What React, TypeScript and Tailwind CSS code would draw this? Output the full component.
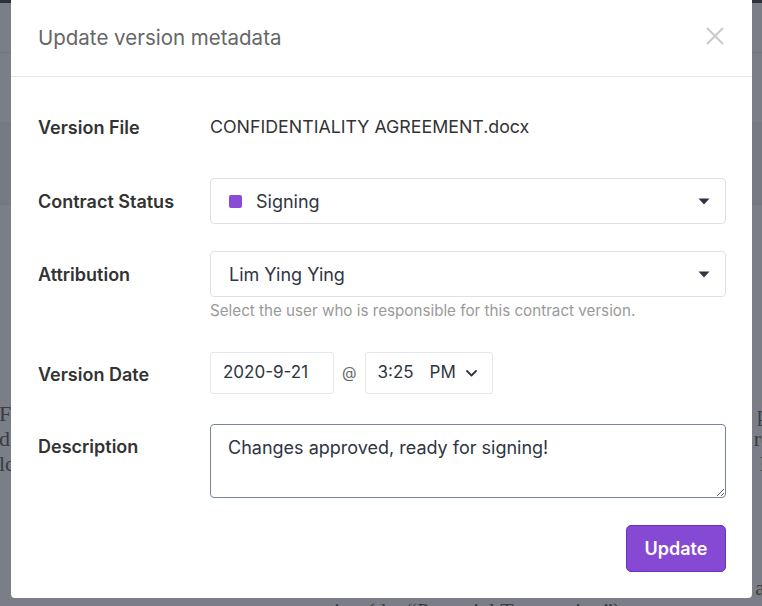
import { X } from "lucide-react";

const font = { fontFamily: "Inter, 'Noto Sans', sans-serif" };

function Caret() {
  return (
    <svg width="12" height="7" viewBox="0 0 12 7" className="shrink-0">
      <path d="M0.5 0.5 L11.5 0.5 L6 6.5 Z" fill="#2f3542" />
    </svg>
  );
}

function Chevron() {
  return (
    <svg width="11" height="7" viewBox="0 0 11 7" className="shrink-0">
      <path d="M1 1 L5.5 5.5 L10 1" fill="none" stroke="#2f3542" strokeWidth="1.8" strokeLinecap="round" strokeLinejoin="round" />
    </svg>
  );
}

export default function App() {
  return (
    <div className="relative h-[606px] w-[762px] overflow-hidden bg-[#7b7e86]" style={font}>
      {/* page behind the dialog, dimmed */}
      <div className="h-[3px] bg-[#2d3038]" />
      <div className="h-[50px] border-b border-[#71747c]" />
      <div className="h-[69px]" />
      <div className="h-[83px] border-y border-[#74777f] bg-[#777a82]" />
      <div className="mt-[196px] flex flex-col text-[22px] leading-[25px] text-[#3a3c42]" style={{ fontFamily: "'Liberation Serif', serif" }}>
        <div className="flex justify-between -ml-[1px] -mr-[6px]"><span>FI</span><span>p</span></div>
        <div className="flex justify-between -ml-[1px] -mr-[10px]"><span>d</span><span>ro</span></div>
        <div className="flex justify-between -ml-[1px] -mr-[4px]"><span>lc</span><span>l</span></div>
        <div className="mt-[99px] flex justify-end -mr-[3px]"><span>a</span></div>
        <div className="-mt-[2px] pl-[318px] whitespace-nowrap">ation (the “Potential Transaction”).</div>
      </div>

      {/* dialog */}
      <div className="absolute left-[11px] top-0 w-[741px] rounded-b-[4px] bg-white">
        <div className="flex h-[77px] items-center justify-between border-b border-[#e6e6e6] pl-[27px] pr-[22px]">
          <h2 className="text-[20.5px] font-normal text-[#666666]">Update version metadata</h2>
          <button className="-mt-[4px] text-[#c9c9c9]">
            <X size={30} strokeWidth={1.5} />
          </button>
        </div>

        <div className="pl-[27px] pr-[26px] pb-[26px] pt-[27px] text-[#333333]">
          <div className="mb-[28px] flex h-[46px] items-center">
            <div className="w-[172px] text-[18px] font-semibold">Version File</div>
            <div className="text-[17.8px]">CONFIDENTIALITY AGREEMENT.docx</div>
          </div>

          <div className="mb-[27px] flex items-center">
            <div className="w-[172px] text-[18px] font-semibold">Contract Status</div>
            <div className="flex h-[46px] flex-1 items-center rounded-[4px] border border-[#dde1e7] pl-[18px] pr-[15px]">
              <span className="mr-[14px] h-[13px] w-[13px] rounded-[2px] bg-[#8a4bd6]" />
              <span className="flex-1 text-[18px] text-[#2f3542]">Signing</span>
              <Caret />
            </div>
          </div>

          <div className="mb-[31px] flex items-start">
            <div className="flex h-[46px] w-[172px] items-center text-[18px] font-semibold">Attribution</div>
            <div className="flex-1">
              <div className="flex h-[46px] items-center rounded-[4px] border border-[#dde1e7] pl-[18px] pr-[15px]">
                <span className="flex-1 text-[18px] text-[#2f3542]">Lim Ying Ying</span>
                <Caret />
              </div>
              <div className="mt-[4px] text-[15.2px] leading-[20px] text-[#9a9a9a]">
                Select the user who is responsible for this contract version.
              </div>
            </div>
          </div>

          <div className="mb-[30px] flex items-center">
            <div className="w-[172px] pt-[2px] text-[18px] font-semibold">Version Date</div>
            <div className="flex h-[42px] w-[124px] items-center rounded-[3px] border border-[#e3e6ea] pl-[12px] text-[17px] text-[#2f3542]">
              2020-9-21
            </div>
            <span className="mx-[8px] text-[15px] text-[#666666]">@</span>
            <div className="flex h-[42px] w-[128px] items-center rounded-[3px] border border-[#e3e6ea] pl-[12px] text-[17px] text-[#2f3542]">
              <span>3:25</span>
              <span className="ml-[16px] mr-[10px]">PM</span>
              <Chevron />
            </div>
          </div>

          <div className="mb-[27px] flex items-start">
            <div className="w-[172px] pt-[12px] text-[18px] font-semibold leading-[22px]">Description</div>
            <textarea
              className="h-[74px] flex-1 resize-y rounded-[4px] border border-[#7a8499] px-[17px] pt-[11px] text-[18px] leading-[24px] text-[#2f3542] outline-none"
              style={font}
              defaultValue="Changes approved, ready for signing!"
            />
          </div>

          <div className="flex justify-end">
            <button className="h-[47px] w-[100px] rounded-[5px] border border-[#6b33ba] bg-[#8549d3] text-[18px] font-semibold text-white">
              Update
            </button>
          </div>
        </div>
      </div>
    </div>
  );
}
